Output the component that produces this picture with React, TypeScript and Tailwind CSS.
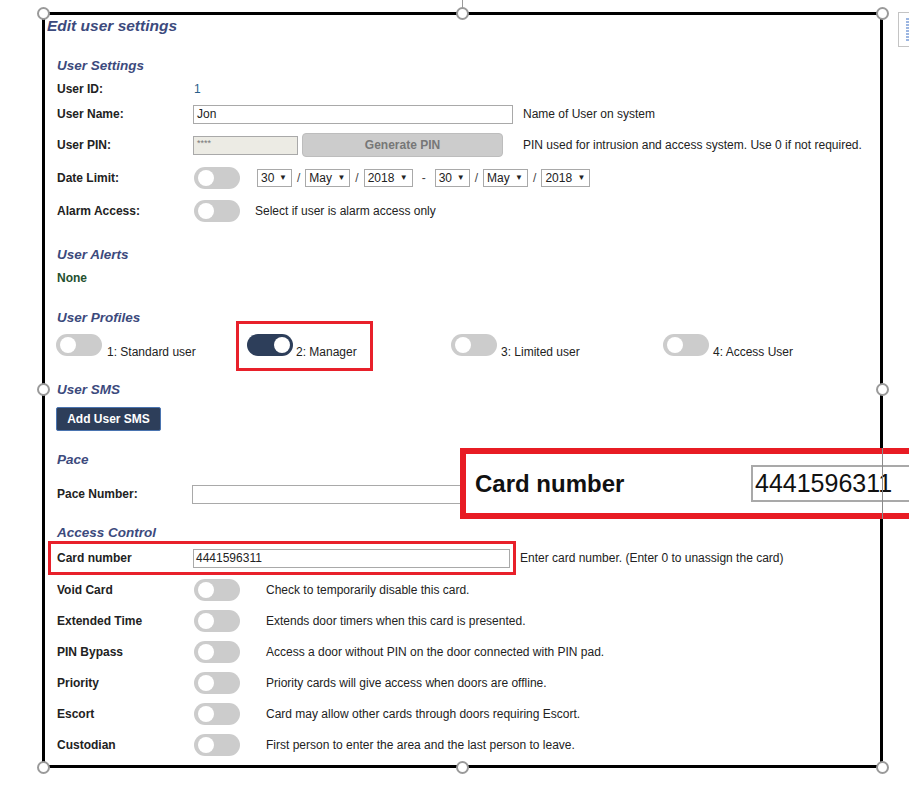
import React from "react";

const Toggle = ({ on = false }: { on?: boolean }) => (
  <span
    className={
      on
        ? "relative inline-block shrink-0 w-[46px] h-[22px] rounded-full bg-[#2d3e5a]"
        : "relative inline-block shrink-0 w-[46px] h-[22px] rounded-full bg-[#cccccc]"
    }
  >
    <span
      className={
        on
          ? "absolute top-[3px] left-[27px] w-[16px] h-[16px] rounded-full bg-white"
          : "absolute top-[3px] left-[4px] w-[16px] h-[16px] rounded-full bg-white"
      }
    />
  </span>
);

const Sel = ({ v, w }: { v: string; w: string }) => (
  <span
    className={`inline-flex items-center justify-between h-[18px] border border-[#a9a9a9] pl-[3px] pr-[4px] text-[12px] text-[#222] ${w}`}
  >
    <span>{v}</span>
    <span className="text-[8px] leading-none">▼</span>
  </span>
);

const Heading = ({ children, cls = "" }: { children: React.ReactNode; cls?: string }) => (
  <div className={`h-[20px] leading-[20px] text-[13.5px] font-bold italic text-[#3c4a7d] ${cls}`}>{children}</div>
);

const Label = ({ children }: { children: React.ReactNode }) => (
  <span className="w-[136px] shrink-0 text-[12px] font-bold text-[#222]">{children}</span>
);

const Help = ({ children, cls = "" }: { children: React.ReactNode; cls?: string }) => (
  <span className={`text-[12px] text-[#222] ${cls}`}>{children}</span>
);

const Handle = ({ x, y }: { x: string; y: string }) => (
  <span className={`absolute ${x} ${y} w-[13px] h-[13px] rounded-full border-2 border-[#9a9a9a] bg-white`} />
);

const accessRows: [string, string][] = [
  ["Void Card", "Check to temporarily disable this card."],
  ["Extended Time", "Extends door timers when this card is presented."],
  ["PIN Bypass", "Access a door without PIN on the door connected with PIN pad."],
  ["Priority", "Priority cards will give access when doors are offline."],
  ["Escort", "Card may allow other cards through doors requiring Escort."],
  ["Custodian", "First person to enter the area and the last person to leave."],
];

export default function App() {
  return (
    <div className="relative w-[909px] h-[785px] overflow-hidden bg-white font-['Liberation_Sans',Arial,sans-serif]">
      <div className="pt-[12px] pl-[42px]">
        <div className="relative w-[841px] h-[756px] border-[3px] border-black bg-white">
          <div className="mt-[1px] pl-[2px] h-[20px] leading-[20px] text-[15.5px] font-bold italic text-[#3c4a7d]">Edit user settings</div>

          <div className="pl-[12px]">
            <Heading cls="mt-[20px]">User Settings</Heading>

            <div className="mt-[1px] h-[24px] flex items-center">
              <Label>User ID:</Label>
              <span className="ml-[1px] text-[12px] text-[#2a5d8a]">1</span>
            </div>

            <div className="h-[26px] flex items-center">
              <Label>User Name:</Label>
              <span className="w-[320px] h-[19px] border border-[#a9a9a9] pl-[3px] text-[12px] leading-[17px] text-[#222]">Jon</span>
              <Help cls="ml-[10px]">Name of User on system</Help>
            </div>

            <div className="h-[36px] flex items-center">
              <Label>User PIN:</Label>
              <span className="w-[105px] h-[19px] border border-[#a9a9a9] bg-[#ecebe4] pl-[3px] text-[9px] leading-[12px] text-[#777]">****</span>
              <span className="ml-[4px] w-[201px] h-[24px] rounded-[4px] border border-[#bdbdbd] bg-[#cccccc] flex items-center justify-center text-[12px] font-bold text-[#777]">
                Generate PIN
              </span>
              <Help cls="ml-[20px]">PIN used for intrusion and access system. Use 0 if not required.</Help>
            </div>

            <div className="h-[30px] flex items-center">
              <Label>Date Limit:</Label>
              <span className="ml-[1px] flex"><Toggle /></span>
              <span className="ml-[17px] flex items-center">
                <Sel v="30" w="w-[35px]" />
                <span className="mx-[5px] text-[12px] text-[#444]">/</span>
                <Sel v="May" w="w-[45px]" />
                <span className="mx-[5px] text-[12px] text-[#444]">/</span>
                <Sel v="2018" w="w-[49px]" />
                <span className="mx-[9px] text-[12px] text-[#444]">-</span>
                <Sel v="30" w="w-[35px]" />
                <span className="mx-[5px] text-[12px] text-[#444]">/</span>
                <Sel v="May" w="w-[45px]" />
                <span className="mx-[5px] text-[12px] text-[#444]">/</span>
                <Sel v="2018" w="w-[49px]" />
              </span>
            </div>

            <div className="h-[36px] flex items-center">
              <Label>Alarm Access:</Label>
              <span className="ml-[1px] flex"><Toggle /></span>
              <Help cls="ml-[15px]">Select if user is alarm access only</Help>
            </div>

            <Heading cls="mt-[16px]">User Alerts</Heading>
            <div className="mt-[3px] h-[20px] leading-[20px] text-[12px] font-bold text-[#24502f]">None</div>

            <Heading cls="mt-[20px]">User Profiles</Heading>
            <div className="mt-[6px] h-[26px] flex -ml-[1px]">
              <div className="w-[191px] flex items-start">
                <Toggle />
                <span className="ml-[5px] mt-[10px] leading-[16px] text-[12px] text-[#222]">1: Standard user</span>
              </div>
              <div className="w-[204px] flex items-start">
                <Toggle on />
                <span className="ml-[3px] mt-[10px] leading-[16px] text-[12px] text-[#222]">2: Manager</span>
              </div>
              <div className="w-[212px] flex items-start">
                <Toggle />
                <span className="ml-[4px] mt-[10px] leading-[16px] text-[12px] text-[#222]">3: Limited user</span>
              </div>
              <div className="flex items-start">
                <Toggle />
                <span className="ml-[4px] mt-[10px] leading-[16px] text-[12px] text-[#222]">4: Access User</span>
              </div>
            </div>

            <Heading cls="mt-[20px]">User SMS</Heading>
            <div className="mt-[7px] -ml-[1px] w-[105px] h-[24px] rounded-[2px] border border-[#4a74b0] bg-[#2d3e5a] flex items-center justify-center text-[12px] font-bold text-white">
              Add User SMS
            </div>

            <Heading cls="mt-[19px]">Pace</Heading>
            <div className="mt-[13px] h-[22px] flex items-center">
              <Label>Pace Number:</Label>
              <span className="-ml-[1px] w-[322px] h-[19px] border border-[#a9a9a9]" />
            </div>

            <Heading cls="mt-[18px]">Access Control</Heading>
            <div className="mt-[3px] h-[24px] flex items-center">
              <Label>Card number</Label>
              <span className="w-[317px] h-[19px] border border-[#a9a9a9] pl-[2px] text-[12px] leading-[17px] text-[#222]">4441596311</span>
              <Help cls="ml-[10px]">Enter card number. (Enter 0 to unassign the card)</Help>
            </div>

            <div className="mt-[4px]">
              {accessRows.map(([l, h]) => (
                <div key={l} className="h-[31px] flex items-center">
                  <Label>{l}</Label>
                  <span className="ml-[1px] flex"><Toggle /></span>
                  <Help cls="ml-[26px]">{h}</Help>
                </div>
              ))}
            </div>
          </div>

          {/* annotation boxes */}
          <div className="absolute left-[191px] top-[306px] w-[137px] h-[50px] border-[3px] border-[#e8202a]" />
          <div className="absolute left-[3px] top-[526px] w-[468px] h-[34px] border-[3px] border-[#e8202a]" />
        </div>
      </div>

      {/* selection handles */}
      <span className="absolute left-[462px] top-0 w-px h-[8px] bg-[#9a9a9a]" />
      <Handle x="left-[37px]" y="top-[7px]" />
      <Handle x="left-[456px]" y="top-[7px]" />
      <Handle x="left-[876px]" y="top-[7px]" />
      <Handle x="left-[37px]" y="top-[383px]" />
      <Handle x="left-[876px]" y="top-[383px]" />
      <Handle x="left-[37px]" y="top-[761px]" />
      <Handle x="left-[456px]" y="top-[761px]" />
      <Handle x="left-[876px]" y="top-[761px]" />

      {/* layout options icon */}
      <div className="absolute left-[898px] top-[12px] w-[20px] h-[35px] border border-[#c4c4c4] bg-white">
        <svg width="20" height="35" viewBox="0 0 20 35" className="block">
          {[6, 9, 12, 15, 18, 21, 24, 27].map((y) => (
            <line key={y} x1="7" x2="14" y1={y} y2={y} stroke="#3b6fc4" strokeWidth="1" />
          ))}
        </svg>
      </div>

      {/* zoomed callout */}
      <div className="absolute left-[460px] top-[448px] w-[480px] h-[71px] border-[6px] border-[#e81c24] bg-white flex items-center pl-[9px]">
        <span className="w-[276px] shrink-0 text-[24px] font-bold text-[#111]">Card number</span>
        <span className="w-[200px] h-[37px] shrink-0 border-2 border-[#a9a9a9] pl-[2px] text-[25px] leading-[33px] text-[#111]">4441596311</span>
      </div>
      <span className="absolute left-[882px] top-[448px] w-px h-[71px] bg-[#8a8a8a]" />
    </div>
  );
}
